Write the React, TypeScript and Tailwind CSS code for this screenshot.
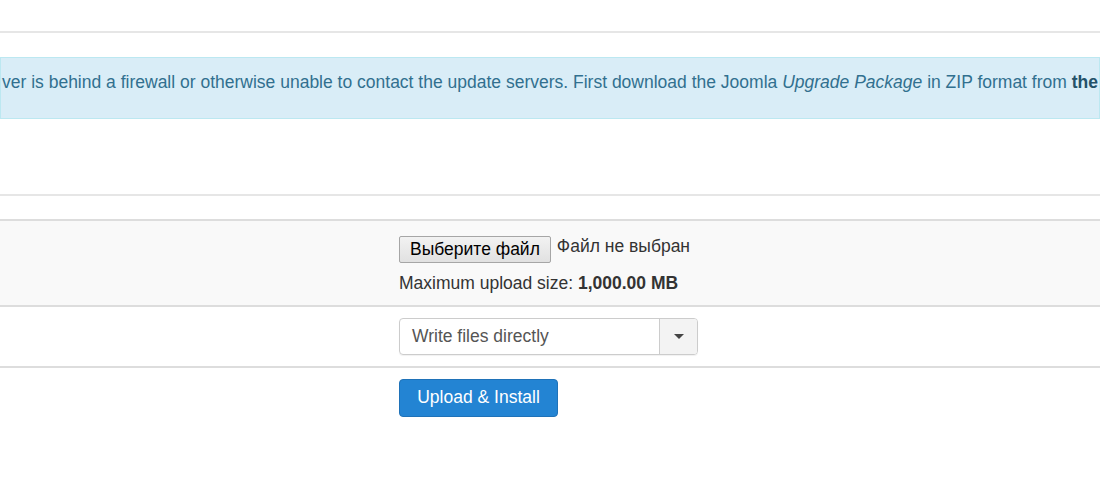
import React from "react";

export default function App() {
  return (
    <div className="w-[1100px] h-[500px] bg-white overflow-hidden font-['Liberation_Sans',Arial,sans-serif] text-[17.5px] text-[#333]">
      <div className="h-[31px]" />
      <div className="border-t-2 border-[#e6e6e6]" />
      <div className="mt-[24px] h-[62px] bg-[#d9edf7] border border-[#bce8f1] flex items-center overflow-hidden">
        <p className="whitespace-nowrap text-[#31708f] text-[17.5px] -mt-[12px] pl-[1px]">
          ver is behind a firewall or otherwise unable to contact the update servers. First download the Joomla{" "}
          <em>Upgrade Package</em> in ZIP format from <strong className="text-[#245269]">the official Joomla download page</strong>.
        </p>
      </div>
      <div className="h-[75px]" />
      <div className="border-t-2 border-[#e6e6e6] h-[25px]" />
      <div className="border-t-2 border-[#dddddd] bg-[#f9f9f9] h-[86px] flex">
        <div className="w-[399px] shrink-0" />
        <div className="pt-[15px]">
          <div className="flex items-center gap-[6px]">
            <button className="h-[27px] px-[10px] rounded-[2px] border border-[#a6a6a6] bg-[linear-gradient(#f2f2f2,#e1e1e1)] text-[17.5px] text-black leading-none">
              Выберите файл
            </button>
            <span className="text-[17.5px] text-[#333] -mt-[6px]">Файл не выбран</span>
          </div>
          <div className="mt-[7px] text-[17.5px] text-[#333]">
            Maximum upload size: <strong>1,000.00 MB</strong>
          </div>
        </div>
      </div>
      <div className="border-t-2 border-[#dddddd] h-[61px] flex">
        <div className="w-[399px] shrink-0" />
        <div className="pt-[11px]">
          <div className="flex w-[299px] h-[37px] rounded-[4px] border border-[#cccccc] shadow-[0_1px_1px_rgba(0,0,0,0.06)] overflow-hidden">
            <div className="flex-1 flex items-center pl-[12px] text-[#555] text-[17.5px]">Write files directly</div>
            <div className="w-[38px] border-l border-[#cccccc] bg-[#f3f3f3] flex items-center justify-center">
              <svg width="10" height="6" viewBox="0 0 10 6">
                <path d="M0 0 L10 0 L5 5 Z" fill="#444" />
              </svg>
            </div>
          </div>
        </div>
      </div>
      <div className="border-t-2 border-[#dddddd] flex">
        <div className="w-[399px] shrink-0" />
        <div className="pt-[11px]">
          <button className="w-[159px] h-[38px] rounded-[4px] bg-[#2384d3] border border-[#1f72b8] text-white text-[17.5px] leading-none">
            Upload &amp; Install
          </button>
        </div>
      </div>
    </div>
  );
}
